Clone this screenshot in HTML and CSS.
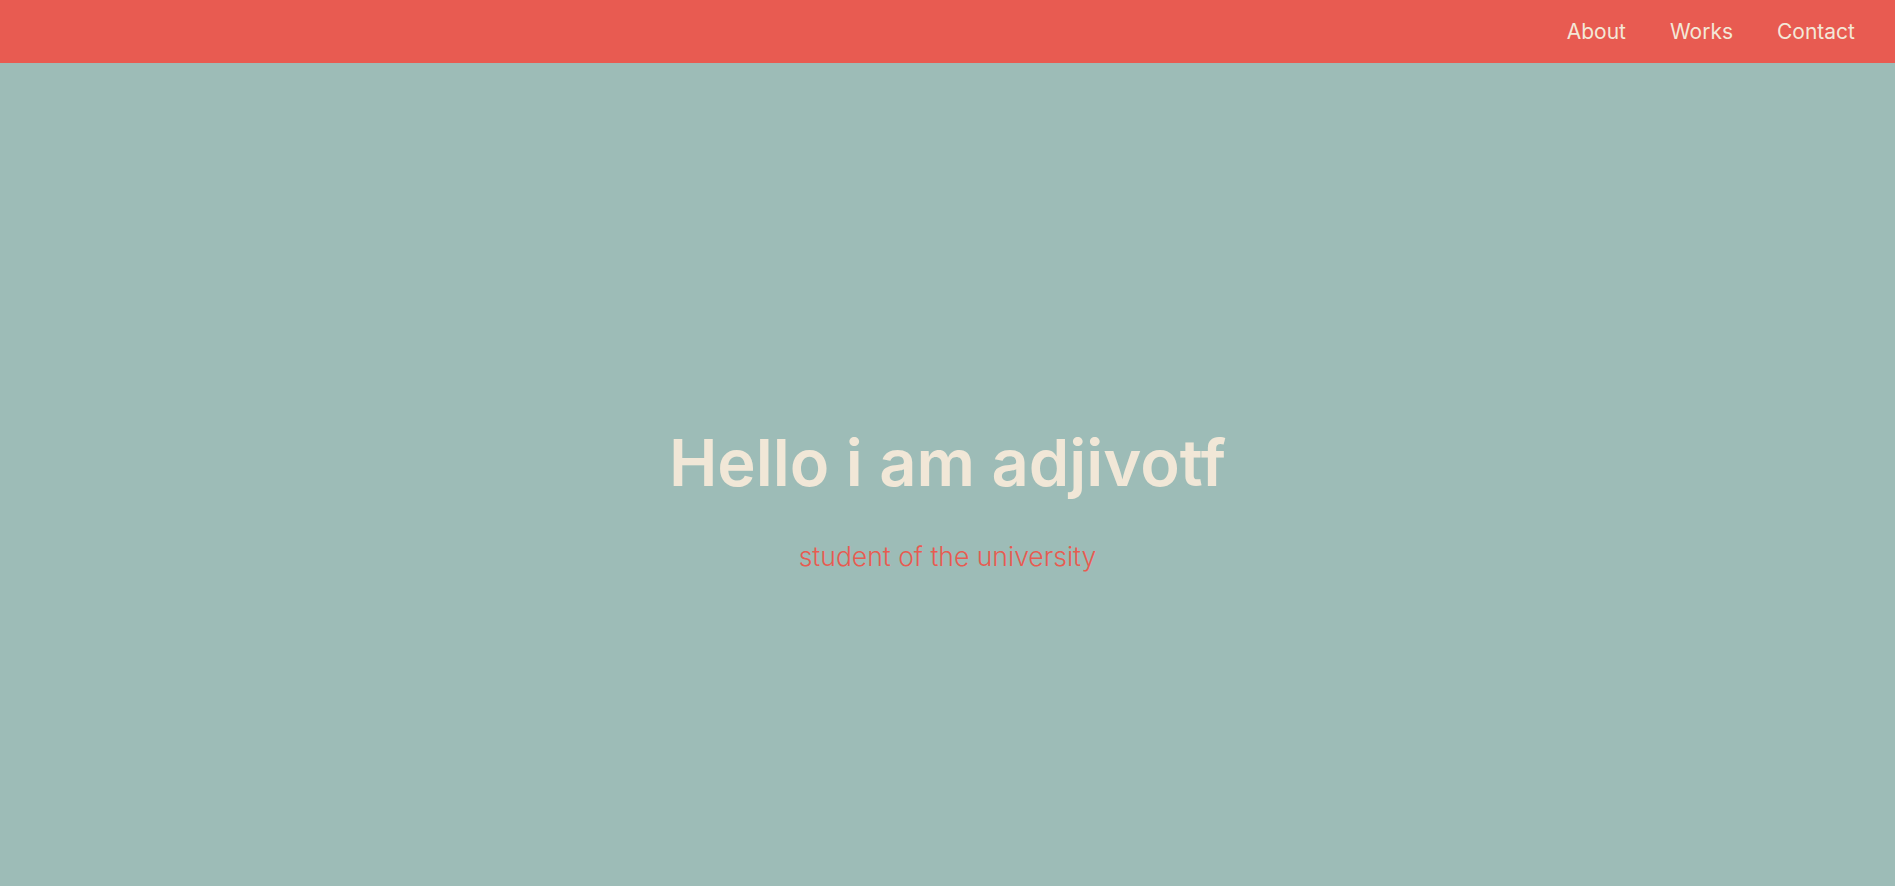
FILE: index.html
```html
<!DOCTYPE html>
<html lang="en">
<head>
<meta charset="utf-8">
<title>adjivotf</title>
<link rel="stylesheet" href="styles.css">
</head>
<body>
<header class="topbar">
  <nav class="nav">
    <a class="nav-link" href="#about">About</a>
    <a class="nav-link" href="#works">Works</a>
    <a class="nav-link" href="#contact">Contact</a>
  </nav>
</header>
<main class="hero">
  <h1 class="hero-title">Hello i am adjivotf</h1>
  <p class="hero-sub">student of the university</p>
</main>
</body>
</html>
```
FILE: styles.css
```css
* { box-sizing: border-box; }
html, body { margin: 0; padding: 0; }
body {
  font-family: Inter, "Open Sans", sans-serif;
  background: #9dbcb7;
  height: 886px;
  display: flex;
  flex-direction: column;
}
.topbar {
  height: 63px;
  background: #e85b51;
  display: flex;
  justify-content: flex-end;
  align-items: center;
  padding-right: 40px;
}
.nav {
  display: flex;
  gap: 44px;
}
.nav-link {
  color: #f3e8d8;
  text-decoration: none;
  font-size: 21px;
  font-weight: 400;
}
.hero {
  flex: 1;
  display: flex;
  flex-direction: column;
  align-items: center;
  justify-content: center;
  padding-top: 47px;
}
.hero-title {
  margin: 0;
  color: #f1e7d7;
  font-size: 65px;
  font-weight: 600;
  line-height: 78px;
}
.hero-sub {
  margin: 38px 0 0;
  color: #e85b51;
  font-size: 26.5px;
  line-height: 32px;
  font-weight: 300;
}
```
